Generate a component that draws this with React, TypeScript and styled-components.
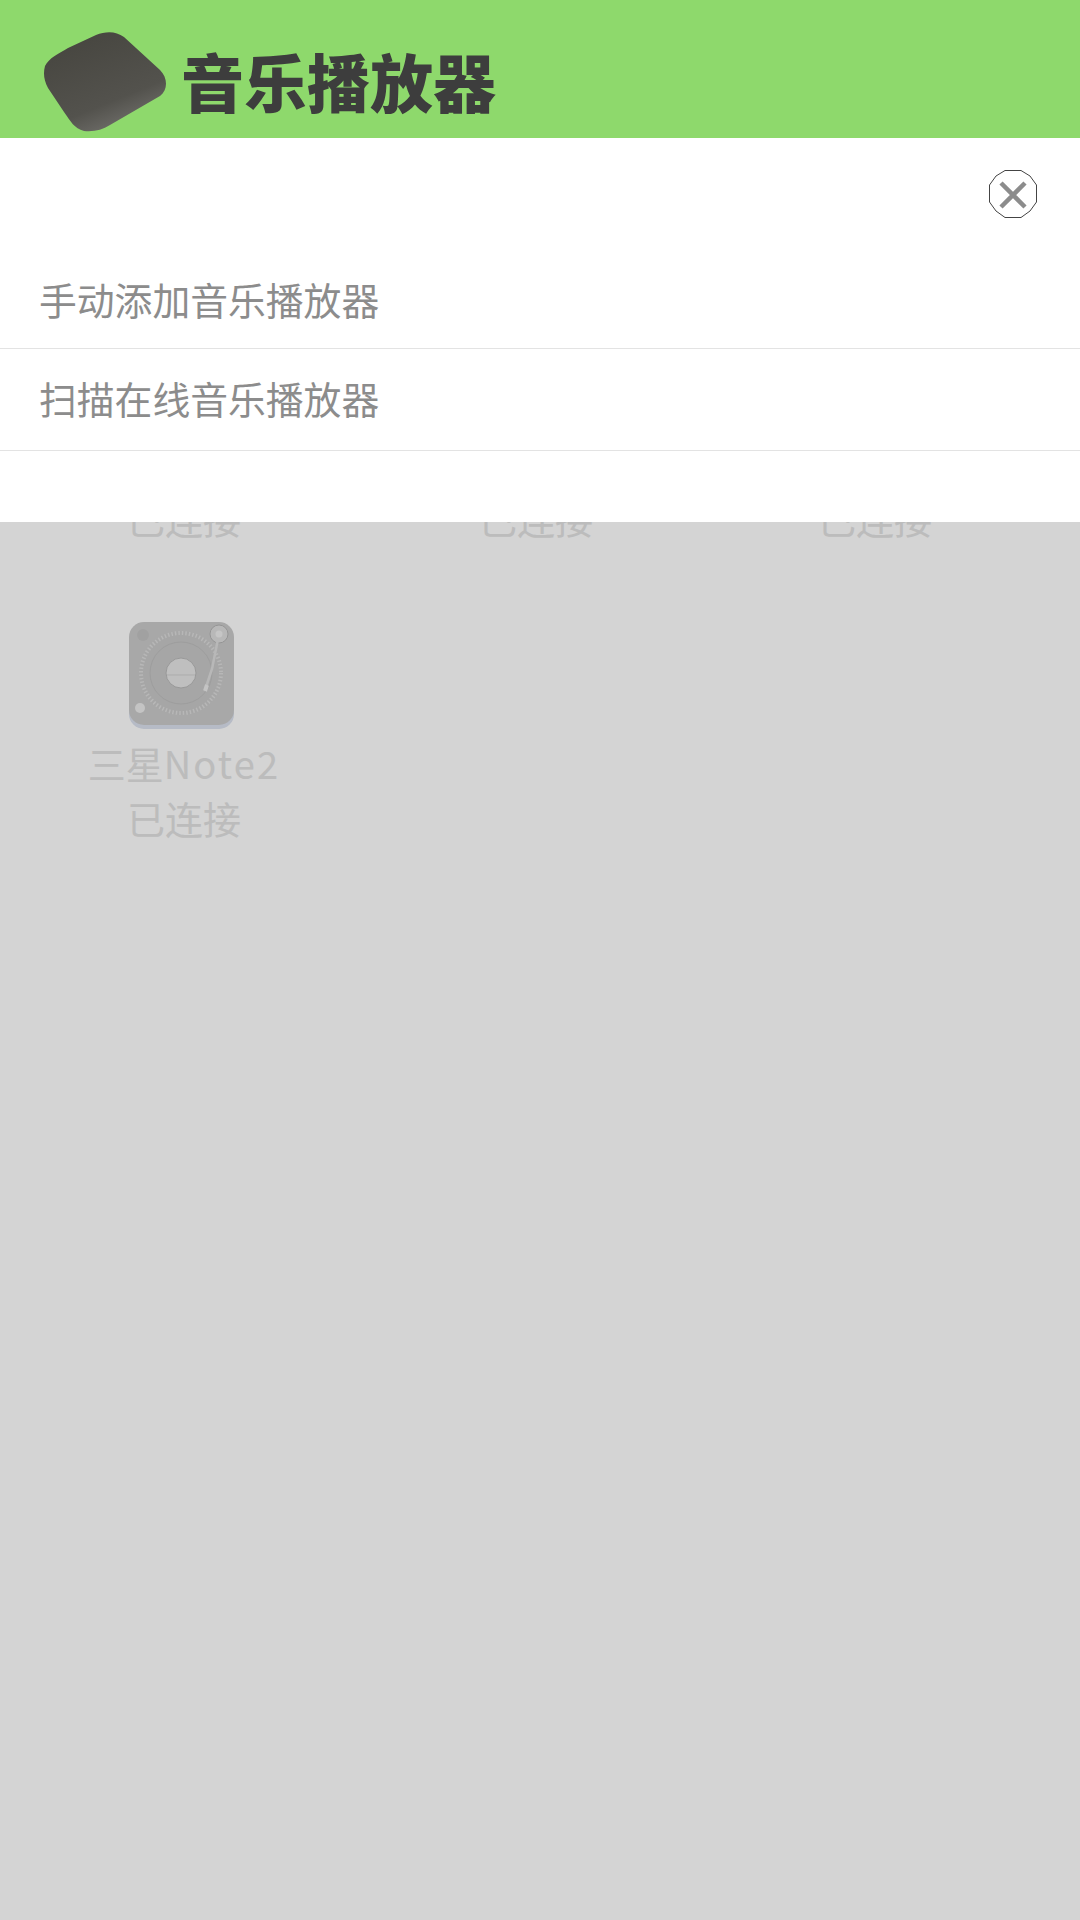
import styled, { createGlobalStyle } from "styled-components";

const GlobalStyle = createGlobalStyle`
  html, body {
    margin: 0;
    padding: 0;
    background: #fff;
    font-family: "Noto Sans CJK SC", "Noto Sans", sans-serif;
  }
`;

const Page = styled.div`
  position: relative;
  width: 1080px;
  height: 1920px;
  overflow: hidden;
  background: #fff;
`;

const Header = styled.header`
  height: 138px;
  box-sizing: border-box;
  background: #8ed96c;
  display: flex;
  align-items: center;
  padding: 28px 0 0 44px;
  gap: 7px;
`;

const Title = styled.h1`
  margin: 0;
  font-size: 63px;
  line-height: 1;
  font-weight: 900;
  color: #3d3d3d;
  position: relative;
  top: -4px;
`;

const DeviceGrid = styled.div`
  display: grid;
  grid-template-columns: 368px 336px 342px;
  grid-auto-rows: 300px;
  padding-top: 183px;
`;

const Tile = styled.div`
  display: flex;
  flex-direction: column;
  align-items: center;
`;

const Cover = styled.svg`
  display: block;
  width: 108px;
  height: 108px;
  margin-left: -4px;
`;

const TileName = styled.div`
  margin-top: 6px;
  font-size: 38px;
  line-height: 55px;
  font-weight: 400;
  text-align: center;
  color: #e2e2e2;
  white-space: nowrap;
`;

const Latin = styled.span`
  letter-spacing: 2.2px;
`;

const Overlay = styled.div`
  position: absolute;
  left: 0;
  right: 0;
  top: 138px;
  bottom: 0;
  background: rgba(0, 0, 0, 0.17);
`;

const Sheet = styled.div`
  background: #fff;
  height: 384px;
  box-sizing: border-box;
  display: flex;
  flex-direction: column;
`;

const CloseRow = styled.div`
  height: 112px;
  box-sizing: border-box;
  display: flex;
  align-items: flex-start;
  justify-content: flex-end;
  padding: 31px 42px 0 0;
`;

const CloseIcon = styled.svg`
  display: block;
  width: 50px;
  height: 50px;
`;

const MenuRow = styled.div<{ $height: number; $lift: number }>`
  height: ${({ $height }) => $height}px;
  box-sizing: border-box;
  display: flex;
  align-items: center;
  padding: 0 0 ${({ $lift }) => $lift}px 39px;
  font-size: 37.8px;
  font-weight: 400;
  color: #8c8c8c;
  border-bottom: 1px solid #e3e3e3;
`;

const Logo = () => (
  <svg width="130" height="102" viewBox="0 0 130 102" style={{ flex: "none" }}>
    <defs>
      <linearGradient id="shell" x1="0.2" y1="0" x2="0.7" y2="1">
        <stop offset="0" stopColor="#46453f" />
        <stop offset="0.7" stopColor="#53524d" />
        <stop offset="1" stopColor="#73726e" />
      </linearGradient>
    </defs>
    <path
      d="M1 34 C5 26 14 22 24 16 L52 3 C62 -1 72 -1 80 5 L116 38 C124 46 124 58 116 64 L66 93 C58 98 50 100 40 99 C30 96 27 90 20 80 L4 56 C0 48 -1 42 1 34 Z"
      fill="url(#shell)"
    />
  </svg>
);

const TurntableCover = () => (
  <Cover viewBox="0 0 108 108">
    <rect x="1" y="4" width="105" height="104" rx="15" fill="#dbe1ee" />
    <rect x="1" y="1" width="105" height="103" rx="15" fill="#cbcbcb" />
    <circle cx="15" cy="14" r="6" fill="#c2c2c2" />
    <circle cx="12" cy="87" r="5" fill="#ececec" />
    <circle cx="53" cy="52" r="42" fill="#c8c8c8" />
    <circle cx="53" cy="52" r="40" fill="none" stroke="#dcdcdc" strokeWidth="4" strokeDasharray="1.5 2" />
    <circle cx="53" cy="52" r="31" fill="none" stroke="#bebebe" strokeWidth="1" />
    <circle cx="53" cy="52" r="15" fill="#e6e6e6" stroke="#b8b8b8" strokeWidth="1" />
    <path d="M39 54 H67" stroke="#cfcfcf" strokeWidth="1" />
    <circle cx="91" cy="13" r="9" fill="#dedede" stroke="#b4b4b4" strokeWidth="1" />
    <circle cx="91" cy="13" r="3.5" fill="#eeeeee" />
    <path d="M90 18 L84 48 L78 66" stroke="#dedede" strokeWidth="2.5" fill="none" />
    <path d="M79 64 L77 70" stroke="#ececec" strokeWidth="4" />
  </Cover>
);

const tiles = [
  { cjk: "音乐", latin: "Box", status: "已连接" },
  { cjk: "音乐", latin: "Box", status: "已连接" },
  { cjk: "音乐", latin: "Box", status: "已连接" },
  { cjk: "三星", latin: "Note2", status: "已连接" },
];

export default function App() {
  return (
    <Page>
      <GlobalStyle />
      <Header>
        <Logo />
        <Title>音乐播放器</Title>
      </Header>
      <DeviceGrid>
        {tiles.map((tile, i) => (
          <Tile key={i}>
            <TurntableCover />
            <TileName>
              {tile.cjk}
              <Latin>{tile.latin}</Latin>
              <br />
              {tile.status}
            </TileName>
          </Tile>
        ))}
      </DeviceGrid>
      <Overlay>
        <Sheet>
          <CloseRow>
            <CloseIcon viewBox="0 0 50 50">
              <path
                d="M17 1.5 H33 L42 7 L48.5 16 V33 L42 42 L33 48.5 H17 L8 42 L1.5 33 V16 L8 7 Z"
                fill="#fff"
                stroke="#444"
                strokeWidth="1"
              />
              <path d="M13 14 L37 38 M37 14 L13 38" stroke="#8c8c8c" strokeWidth="4.5" />
            </CloseIcon>
          </CloseRow>
          <MenuRow $height={99} $lift={2}>手动添加音乐播放器</MenuRow>
          <MenuRow $height={102} $lift={5}>扫描在线音乐播放器</MenuRow>
        </Sheet>
      </Overlay>
    </Page>
  );
}
